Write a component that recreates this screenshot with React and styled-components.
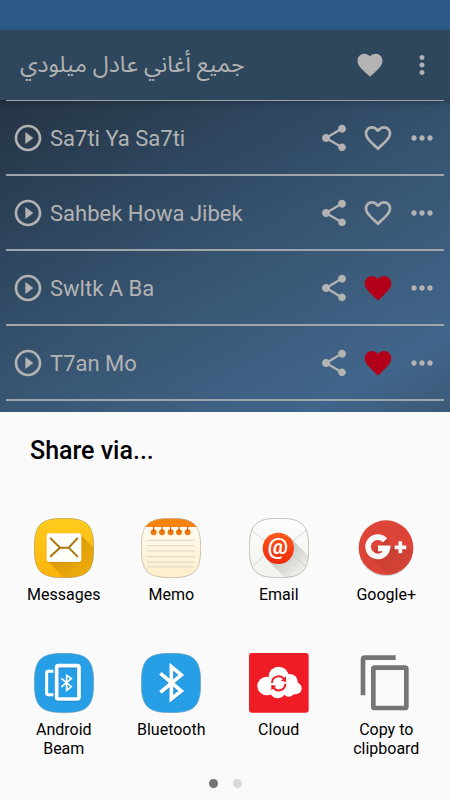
import { useState } from 'react'
import styled, { createGlobalStyle } from 'styled-components'
import {
  MdFavorite,
  MdFavoriteBorder,
  MdMoreHoriz,
  MdMoreVert,
  MdPlayCircleOutline,
  MdShare,
} from 'react-icons/md'

const squircle =
  'M90 1C160 1 179 20 179 90C179 160 160 179 90 179C20 179 1 160 1 90C1 20 20 1 90 1Z'

const AppIcon = ({ children }) => (
  <svg width="60" height="60" viewBox="0 0 180 180" fill="none" aria-hidden="true">
    {children}
  </svg>
)

const MessagesIcon = () => (
  <AppIcon>
    <defs>
      <linearGradient id="msgBg" x1="0" y1="0" x2="0" y2="1">
        <stop offset="0" stopColor="#ffcb1c" />
        <stop offset="1" stopColor="#fbb40c" />
      </linearGradient>
      <linearGradient id="msgShade" x1="0" y1="0" x2="1" y2="1">
        <stop offset="0.3" stopColor="#d99a08" />
        <stop offset="1" stopColor="#f8b30e" />
      </linearGradient>
      <clipPath id="msgClip">
        <path d={squircle} />
      </clipPath>
    </defs>
    <path d={squircle} fill="url(#msgBg)" />
    <path d="M140 50L190 100V190H100L42 130Z" fill="url(#msgShade)" clipPath="url(#msgClip)" />
    <path d={squircle} stroke="#b09a5c" strokeWidth="2" />
    <rect x="38" y="49" width="104" height="86" rx="8" fill="#c98e0c" opacity="0.6" />
    <rect x="38" y="46" width="104" height="86" rx="8" fill="#fffef8" />
    <path
      d="M50 61L78 89H104L130 61M50 115L78 89M104 89L130 115"
      stroke="#a87510"
      strokeWidth="6"
      strokeLinecap="round"
    />
  </AppIcon>
)

const MemoIcon = () => (
  <AppIcon>
    <defs>
      <linearGradient id="memoBg" x1="0" y1="0" x2="0" y2="1">
        <stop offset="0.2" stopColor="#fffaed" />
        <stop offset="1" stopColor="#fdedc9" />
      </linearGradient>
      <clipPath id="memoClip">
        <path d={squircle} />
      </clipPath>
    </defs>
    <path d={squircle} fill="url(#memoBg)" />
    <rect width="180" height="27" fill="#f8820e" clipPath="url(#memoClip)" />
    <path
      d="M18 67H160M18 83H160M18 99H160M18 116H160M18 132H160M18 147H160"
      stroke="#ddd6c6"
      strokeWidth="3"
    />
    {[38, 63, 89, 114, 140].map((x) => (
      <g key={x}>
        <circle cx={x} cy="43" r="9" fill="#f0790d" />
        <path d={`M${x} 26V41`} stroke="#b74d08" strokeWidth="3" />
      </g>
    ))}
    <path d={squircle} stroke="#b5ab98" strokeWidth="2" />
  </AppIcon>
)

const EmailIcon = () => (
  <AppIcon>
    <defs>
      <linearGradient id="mailBg" x1="0" y1="0" x2="0" y2="1">
        <stop offset="0" stopColor="#fdfdfc" />
        <stop offset="1" stopColor="#f1f1ed" />
      </linearGradient>
      <linearGradient id="mailShade" x1="0" y1="0" x2="1" y2="1">
        <stop offset="0.3" stopColor="#c4c4c2" />
        <stop offset="0.8" stopColor="#f1f1ed" />
      </linearGradient>
      <linearGradient id="mailDisc" x1="0" y1="0" x2="0" y2="1">
        <stop offset="0" stopColor="#ff5a1c" />
        <stop offset="1" stopColor="#f02a0c" />
      </linearGradient>
      <clipPath id="mailClip">
        <path d={squircle} />
      </clipPath>
    </defs>
    <path d={squircle} fill="url(#mailBg)" />
    <path d="M122 57L190 125V190H119L54 125Z" fill="url(#mailShade)" clipPath="url(#mailClip)" />
    <path
      d="M6 34L62 82M174 34L118 82M8 147L60 101M172 147L120 101"
      stroke="#c2c2be"
      strokeWidth="2"
    />
    <path d={squircle} stroke="#a5a5a2" strokeWidth="2" />
    <circle cx="88" cy="91" r="47" fill="url(#mailDisc)" />
    <text
      x="87"
      y="108"
      fill="#fff"
      fontFamily="Roboto, sans-serif"
      fontSize="68"
      fontWeight="700"
      textAnchor="middle"
    >
      @
    </text>
  </AppIcon>
)

const GooglePlusIcon = () => (
  <AppIcon>
    <defs>
      <linearGradient id="plusShade" x1="0" y1="0" x2="1" y2="1">
        <stop offset="0.2" stopColor="#b23a30" />
        <stop offset="0.9" stopColor="#db4437" />
      </linearGradient>
      <clipPath id="plusClip">
        <circle cx="90" cy="89" r="82" />
      </clipPath>
    </defs>
    <circle cx="90" cy="93" r="82" fill="#b9b9b9" opacity="0.6" />
    <circle cx="90" cy="89" r="82" fill="#db4437" />
    <path
      d="M92 63L103 82L151 83L190 122V190H115L40 115Z"
      fill="url(#plusShade)"
      opacity="0.5"
      clipPath="url(#plusClip)"
    />
    <path d="M87 67A29 29 0 1 0 94 91H66" stroke="#fafafa" strokeWidth="17" />
    <path d="M116 88H151M133 70V106" stroke="#fafafa" strokeWidth="11" />
  </AppIcon>
)

const BeamIcon = () => (
  <AppIcon>
    <path d={squircle} fill="#279fe7" stroke="#6f9fbd" strokeWidth="2" />
    <path
      d="M58 55H42Q38 55 38 59V121Q38 125 42 125H58"
      stroke="#fff"
      strokeWidth="9"
    />
    <rect x="68" y="41" width="67" height="100" rx="5" stroke="#1a75ad" strokeWidth="11" opacity="0.5" />
    <rect x="68" y="38" width="67" height="100" rx="5" stroke="#fff" strokeWidth="11" />
    <path d="M82 76L112 101L98 112V67L112 77L82 102" stroke="#fff" strokeWidth="5" />
  </AppIcon>
)

const BluetoothIcon = () => (
  <AppIcon>
    <path d={squircle} fill="#279fe7" stroke="#6f9fbd" strokeWidth="2" />
    <path d="M58 64L121 117L91 141V43L121 68L58 121" stroke="#1a75ad" strokeWidth="11" opacity="0.5" />
    <path d="M58 61L121 114L91 138V41L121 66L58 118" stroke="#fff" strokeWidth="11" />
  </AppIcon>
)

const CloudIcon = () => (
  <AppIcon>
    <rect width="179" height="179" rx="9" fill="#ee1c25" />
    <g fill="#fff">
      <circle cx="89" cy="71" r="30" />
      <circle cx="53" cy="99" r="28" />
      <circle cx="122" cy="87" r="24" />
      <circle cx="140" cy="106" r="18" />
      <circle cx="119" cy="112" r="19" />
      <circle cx="86" cy="112" r="24" />
      <rect x="48" y="80" width="90" height="44" />
    </g>
    <g stroke="#ee1c25" strokeWidth="6">
      <path d="M69 90A20 20 0 0 1 105 78" />
      <path d="M109 92A20 20 0 0 1 73 104" />
    </g>
    <path d="M111 70V87L96 83ZM67 112V95L82 99Z" fill="#ee1c25" />
  </AppIcon>
)

const CopyIcon = () => (
  <AppIcon>
    <path d="M119 14H26Q21 14 21 20V127" stroke="#757575" strokeWidth="14" />
    <rect x="52" y="44" width="99" height="121" rx="4" stroke="#757575" strokeWidth="14" />
  </AppIcon>
)

const songs = [
  { name: 'Sa7ti Ya Sa7ti', liked: false },
  { name: 'Sahbek Howa Jibek', liked: false },
  { name: 'Swltk A Ba', liked: true },
  { name: 'T7an Mo', liked: true },
]

const targets = [
  { name: 'Messages', Icon: MessagesIcon },
  { name: 'Memo', Icon: MemoIcon },
  { name: 'Email', Icon: EmailIcon },
  { name: 'Google+', Icon: GooglePlusIcon },
  { name: 'Android Beam', Icon: BeamIcon },
  { name: 'Bluetooth', Icon: BluetoothIcon },
  { name: 'Cloud', Icon: CloudIcon },
  { name: 'Copy to clipboard', Icon: CopyIcon },
]

const App = () => {
  const [liked, setLiked] = useState(songs.map((song) => song.liked))
  const [page, setPage] = useState(0)

  const toggleLike = (index) =>
    setLiked((prev) => prev.map((value, i) => (i === index ? !value : value)))

  return (
    <Screen>
      <GlobalStyle />
      <StatusBar />
      <Toolbar>
        <ToolbarTitle lang="ar" dir="rtl">
          جميع أغاني عادل ميلودي
        </ToolbarTitle>
        <ToolbarActions>
          <IconButton aria-label="Favorites">
            <MdFavorite size={30} />
          </IconButton>
          <IconButton aria-label="Menu">
            <MdMoreVert size={30} />
          </IconButton>
        </ToolbarActions>
      </Toolbar>

      <SongArea>
        <SongList>
          {songs.map((song, index) => (
            <SongRow key={song.name}>
              <IconButton aria-label={`Play ${song.name}`}>
                <MdPlayCircleOutline size={32} />
              </IconButton>
              <SongName>{song.name}</SongName>
              <SongActions>
                <IconButton aria-label="Share">
                  <MdShare size={32} />
                </IconButton>
                <IconButton
                  aria-label="Like"
                  aria-pressed={liked[index]}
                  $active={liked[index]}
                  onClick={() => toggleLike(index)}
                >
                  {liked[index] ? <MdFavorite size={32} /> : <MdFavoriteBorder size={32} />}
                </IconButton>
                <IconButton aria-label="More">
                  <MdMoreHoriz size={32} />
                </IconButton>
              </SongActions>
            </SongRow>
          ))}
        </SongList>
      </SongArea>

      <Sheet>
        <SheetTitle>Share via...</SheetTitle>
        <TargetGrid>
          {targets.map(({ name, Icon }) => (
            <Target key={name}>
              <Icon />
              <TargetName>{name}</TargetName>
            </Target>
          ))}
        </TargetGrid>
        <Pager>
          {[0, 1].map((item) => (
            <PagerDot
              key={item}
              aria-label={`Page ${item + 1}`}
              $active={item === page}
              onClick={() => setPage(item)}
            />
          ))}
        </Pager>
      </Sheet>
    </Screen>
  )
}

const GlobalStyle = createGlobalStyle`
  * {
    box-sizing: border-box;
  }

  body {
    margin: 0;
    font-family: Roboto, sans-serif;
    background: #fafafa;
  }

  button {
    padding: 0;
    border: none;
    background: none;
    color: inherit;
    font: inherit;
    cursor: pointer;
  }
`

const Screen = styled.div`
  display: flex;
  flex-direction: column;
  min-height: 100vh;
`

const StatusBar = styled.div`
  height: 30px;
  background: #2a5988;
`

const Toolbar = styled.header`
  display: flex;
  align-items: center;
  justify-content: space-between;
  height: 70px;
  padding: 0 13px 0 20px;
  background: #2e475c;
  color: #b3b3b3;
`

const ToolbarTitle = styled.h1`
  margin: 0;
  font-family: 'Noto Sans Arabic', 'DejaVu Sans', sans-serif;
  font-size: 23px;
  font-weight: 400;
  line-height: 32px;
`

const ToolbarActions = styled.div`
  display: flex;
  gap: 22px;
`

const IconButton = styled.button`
  display: flex;
  flex: none;
  color: ${({ $active }) => ($active ? '#b2001b' : 'inherit')};
`

const SongArea = styled.main`
  padding: 0 6px 11px;
  color: #b3b3b3;
  background: linear-gradient(
    151deg,
    #253444 0%,
    #2f4760 30%,
    #395875 58%,
    #41658b 86%,
    #3b5a77 100%
  );
  box-shadow: inset 0 8px 6px -6px rgba(0, 0, 0, 0.3);
`

const SongList = styled.ul`
  margin: 0;
  padding: 0;
  list-style: none;
  border-top: 1px solid #a0a5ab;
`

const SongRow = styled.li`
  display: flex;
  align-items: center;
  gap: 6px;
  height: 75px;
  padding: 0 6px;
  border-bottom: 2px solid #a0a5ab;
`

const SongName = styled.span`
  flex: 1;
  padding-top: 2px;
  font-size: 22px;
  line-height: 28px;
`

const SongActions = styled.div`
  display: flex;
  gap: 12px;
`

const Sheet = styled.section`
  flex: 1;
  background: #fafafa;
  color: #000;
`

const SheetTitle = styled.h2`
  margin: 0;
  padding: 24px 30px 0;
  font-size: 25px;
  font-weight: 500;
  line-height: 30px;
`

const TargetGrid = styled.div`
  display: grid;
  grid-template-columns: repeat(4, 1fr);
  grid-auto-rows: 105px;
  row-gap: 30px;
  padding: 52px 10px 0;
`

const Target = styled.button`
  display: flex;
  flex-direction: column;
  align-items: center;
  gap: 7px;
`

const TargetName = styled.span`
  max-width: 84px;
  font-size: 16px;
  line-height: 19px;
  text-align: center;
`

const Pager = styled.div`
  display: flex;
  justify-content: center;
  gap: 15px;
  padding: 21px 0 12px;
`

const PagerDot = styled.button`
  width: 9px;
  height: 9px;
  && {
    border-radius: 50%;
    background: ${({ $active }) => ($active ? '#737373' : '#d9d9d9')};
  }
`

export default App
